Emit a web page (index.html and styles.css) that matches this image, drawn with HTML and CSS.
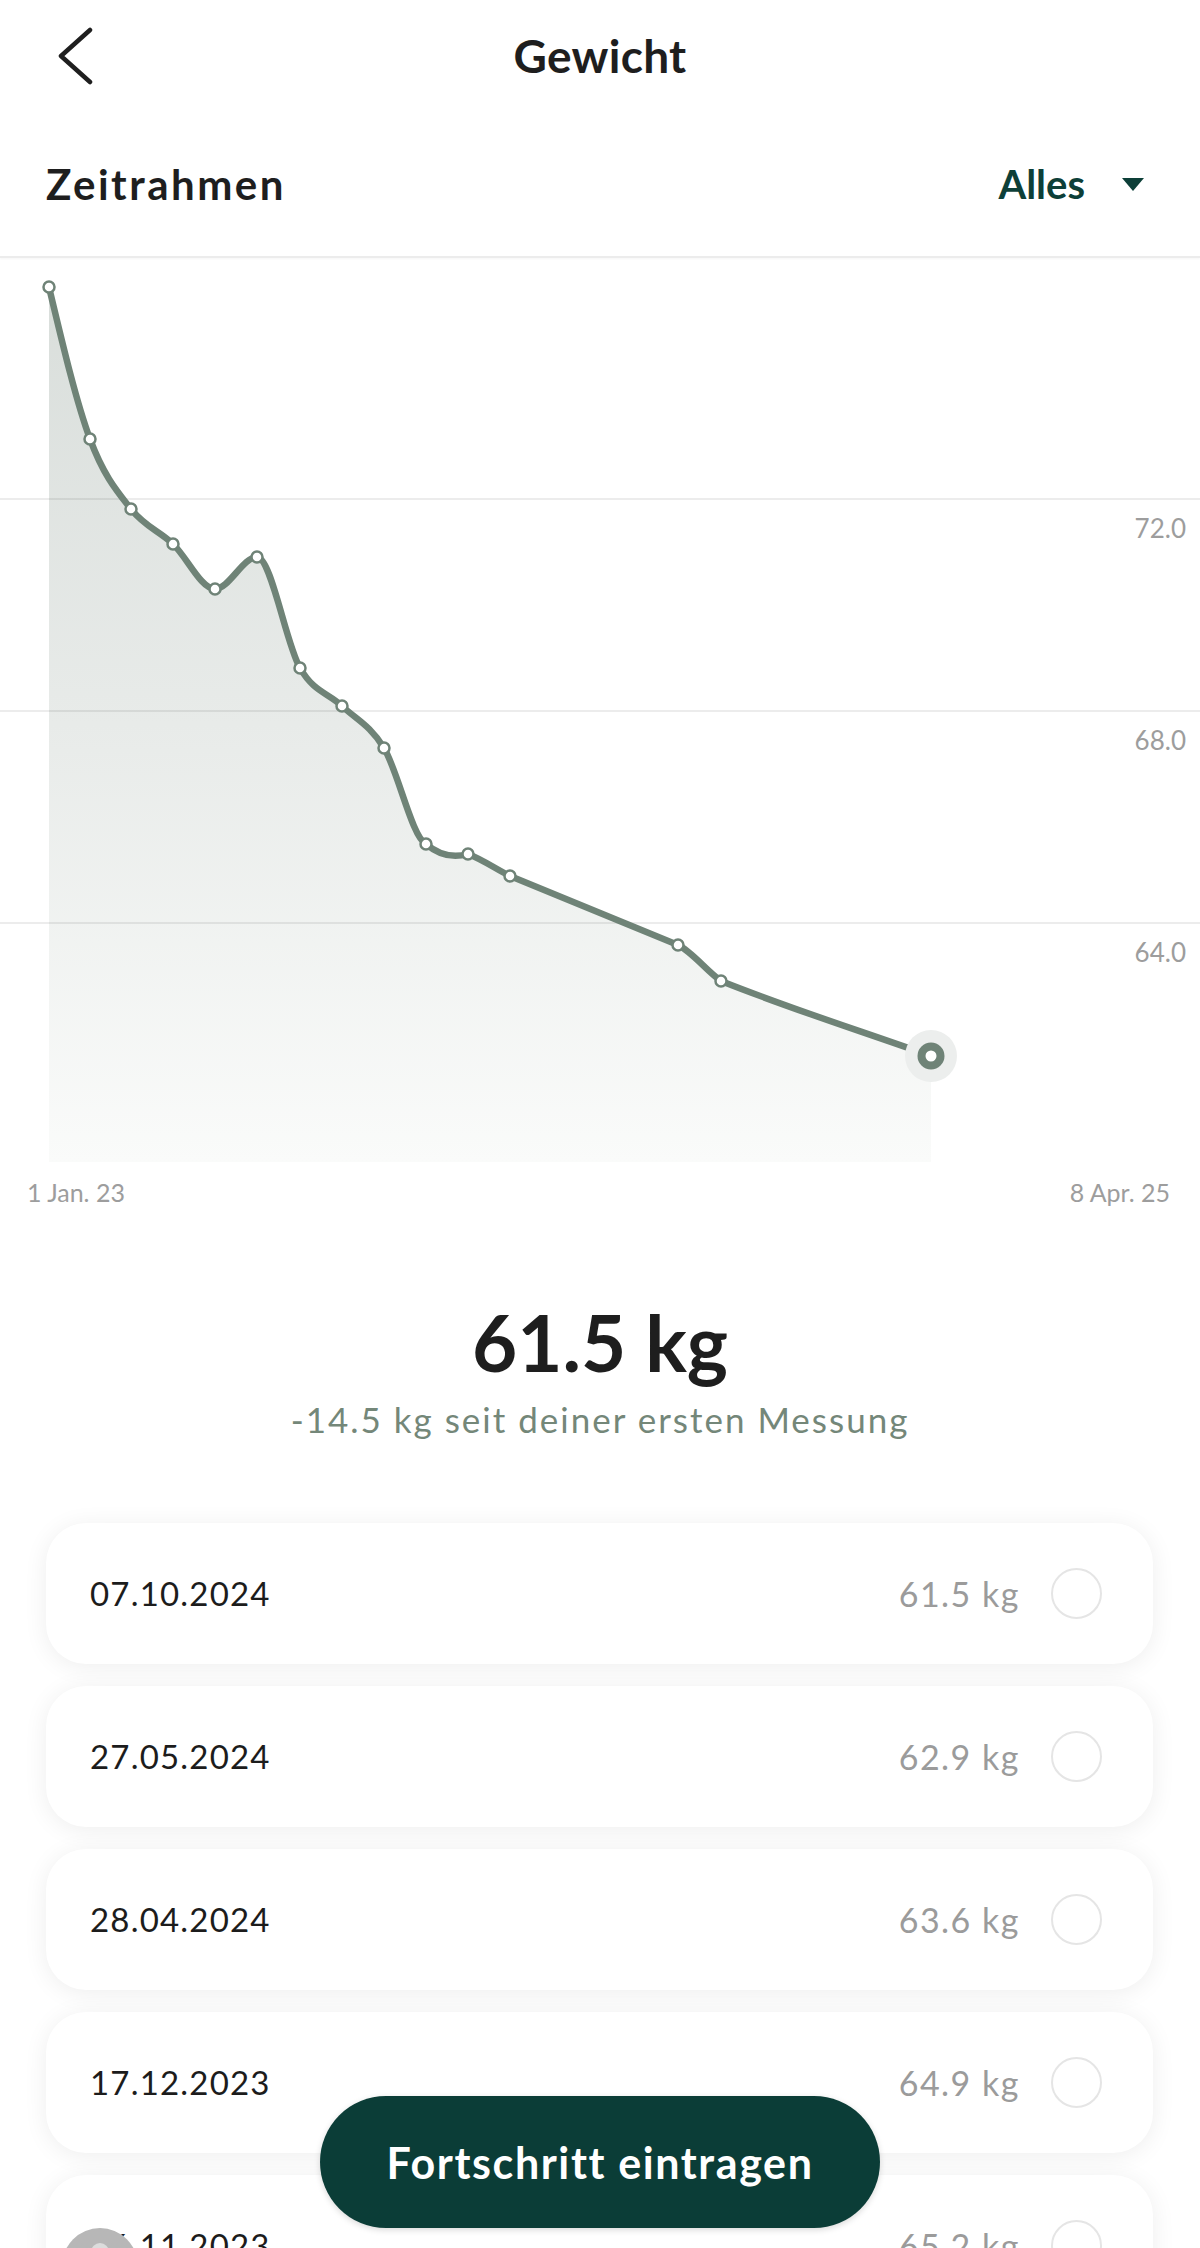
FILE: index.html
```html
<!DOCTYPE html>
<html lang="de">
<head>
<meta charset="utf-8">
<title>Gewicht</title>
<link rel="stylesheet" href="styles.css">
</head>
<body>
<div class="page">
  <header class="topbar">
    <div class="back">
      <svg class="chevron" width="36" height="60" viewBox="0 0 36 60" aria-hidden="true">
        <path d="M33 4 L4 30 L33 56" />
      </svg>
    </div>
    <h1 class="title">Gewicht</h1>
    <div></div>
  </header>

  <div class="filter">
    <span class="filter-label">Zeitrahmen</span>
    <span class="range">Alles
      <svg class="caret" width="22" height="13" viewBox="0 0 22 13" aria-hidden="true"><polygon points="0,0 22,0 11,13" /></svg>
    </span>
  </div>

  <svg class="chart" width="1200" height="960" viewBox="0 258 1200 960">
    <defs>
      <linearGradient id="areaFill" gradientUnits="userSpaceOnUse" x1="0" y1="287" x2="0" y2="1162">
        <stop offset="0" stop-color="#d9dedb"/>
        <stop offset="0.5" stop-color="#e8ebe9"/>
        <stop offset="1" stop-color="#fafbfa"/>
      </linearGradient>
    </defs>
    <path class="area" d="M49,287 C62.7,344.5 76.3,402 90,439 C103.7,476 117.3,491.6 131,509 C145,526.9 159,530.7 173,544 C187,557.3 201,589 215,589 C229,589 243,557 257,557 C271.3,557 285.7,643.2 300,668 C314,692.3 328,692.7 342,706 C356,719.3 370,725 384,748 C398,771 412,837.3 426,844 C440,856 454,858 468,854 C482,859.3 496,869 510,876 C566,899 622,922 678,945 C692.3,952 706.7,971 721,981 C791,1009 861,1031 931,1056 L931,1162 L49,1162 Z"/>
    <line class="grid" x1="0" y1="499" x2="1200" y2="499"/>
    <line class="grid" x1="0" y1="711" x2="1200" y2="711"/>
    <line class="grid" x1="0" y1="923" x2="1200" y2="923"/>
    <text class="axis" x="1186" y="538" text-anchor="end">72.0</text>
    <text class="axis" x="1186" y="750" text-anchor="end">68.0</text>
    <text class="axis" x="1186" y="962" text-anchor="end">64.0</text>
    <path class="line" d="M49,287 C62.7,344.5 76.3,402 90,439 C103.7,476 117.3,491.6 131,509 C145,526.9 159,530.7 173,544 C187,557.3 201,589 215,589 C229,589 243,557 257,557 C271.3,557 285.7,643.2 300,668 C314,692.3 328,692.7 342,706 C356,719.3 370,725 384,748 C398,771 412,837.3 426,844 C440,856 454,858 468,854 C482,859.3 496,869 510,876 C566,899 622,922 678,945 C692.3,952 706.7,971 721,981 C791,1009 861,1031 931,1056"/>
    <g class="dots">
      <circle cx="49" cy="287" r="5.5"/>
      <circle cx="90" cy="439" r="5.5"/>
      <circle cx="131" cy="509" r="5.5"/>
      <circle cx="173" cy="544" r="5.5"/>
      <circle cx="215" cy="589" r="5.5"/>
      <circle cx="257" cy="557" r="5.5"/>
      <circle cx="300" cy="668" r="5.5"/>
      <circle cx="342" cy="706" r="5.5"/>
      <circle cx="384" cy="748" r="5.5"/>
      <circle cx="426" cy="844" r="5.5"/>
      <circle cx="468" cy="854" r="5.5"/>
      <circle cx="510" cy="876" r="5.5"/>
      <circle cx="678" cy="945" r="5.5"/>
      <circle cx="721" cy="981" r="5.5"/>
    </g>
    <circle class="halo" cx="931" cy="1056" r="26"/>
    <circle class="endpoint" cx="931" cy="1056" r="9.5"/>
    <text class="axis axis-x" x="27" y="1202">1 Jan. 23</text>
    <text class="axis axis-x" x="1170" y="1202" text-anchor="end">8 Apr. 25</text>
  </svg>

  <section class="summary">
    <div class="big">61.5 kg</div>
    <div class="delta">-14.5 kg seit deiner ersten Messung</div>
  </section>

  <ul class="list">
    <li class="card"><span class="date">07.10.2024</span><span class="weight">61.5 kg</span><span class="radio"></span></li>
    <li class="card"><span class="date">27.05.2024</span><span class="weight">62.9 kg</span><span class="radio"></span></li>
    <li class="card"><span class="date">28.04.2024</span><span class="weight">63.6 kg</span><span class="radio"></span></li>
    <li class="card"><span class="date">17.12.2023</span><span class="weight">64.9 kg</span><span class="radio"></span></li>
    <li class="card"><span class="date">26.11.2023</span><span class="weight">65.2 kg</span><span class="radio"></span></li>
  </ul>

  <button class="cta">Fortschritt eintragen</button>
  <div class="bubble"><span class="bubble-inner"></span></div>
</div>
</body>
</html>
```

FILE: styles.css
```css
* {
  box-sizing: border-box;
  margin: 0;
  padding: 0;
}

html, body {
  width: 1200px;
  height: 2248px;
  overflow: hidden;
  background: #ffffff;
}

body {
  font-family: Lato, "Liberation Sans", sans-serif;
  color: #1e1e1e;
}

.page {
  position: relative;
  width: 1200px;
  height: 2248px;
  overflow: hidden;
}

.topbar {
  height: 112px;
  display: grid;
  grid-template-columns: 1fr auto 1fr;
  align-items: center;
}

.back {
  padding-left: 57px;
  display: flex;
  align-items: center;
}

.chevron path {
  fill: none;
  stroke: #1f1f1f;
  stroke-width: 4.5;
  stroke-linecap: round;
  stroke-linejoin: round;
}

.title {
  font-size: 46px;
  font-weight: 700;
  line-height: 1;
  letter-spacing: 0.3px;
  color: #1e1e1e;
}

.filter {
  height: 146px;
  display: flex;
  align-items: center;
  justify-content: space-between;
  padding: 0 56px 0 46px;
  border-bottom: 2px solid #ececec;
  box-shadow: 0 1px 2px rgba(0, 0, 0, 0.04);
}

.filter-label {
  font-size: 42px;
  font-weight: 700;
  line-height: 1;
  letter-spacing: 2.5px;
  color: #1e1e1e;
}

.range {
  display: flex;
  align-items: center;
  gap: 37px;
  font-size: 40px;
  font-weight: 700;
  line-height: 1;
  color: #0d3f38;
}

.caret polygon {
  fill: #0d3f38;
}

.chart {
  display: block;
  width: 1200px;
  height: 960px;
}

.area {
  fill: url(#areaFill);
}

.grid {
  stroke: rgba(0, 0, 0, 0.075);
  stroke-width: 2;
}

.line {
  fill: none;
  stroke: #6f8377;
  stroke-width: 6.5;
  stroke-linecap: round;
  stroke-linejoin: round;
}

.dots circle {
  fill: #ffffff;
  stroke: #6f8377;
  stroke-width: 2.5;
}

.halo {
  fill: #eceeed;
}

.endpoint {
  fill: #ffffff;
  stroke: #6f8377;
  stroke-width: 8;
}

.axis {
  font-family: Lato, "Liberation Sans", sans-serif;
  font-size: 26px;
  fill: #9d9d9d;
}

.axis-x {
  font-size: 25px;
}

.summary {
  margin-top: 85px;
  text-align: center;
}

.big {
  font-size: 78px;
  font-weight: 700;
  line-height: 1;
  color: #1e1e1e;
}

.delta {
  margin-top: 21px;
  font-size: 35px;
  line-height: 1;
  letter-spacing: 2px;
  color: #748779;
}

.list {
  list-style: none;
  margin-top: 86px;
  padding: 0 47px 0 46px;
  display: flex;
  flex-direction: column;
  gap: 22px;
}

.card {
  height: 141px;
  flex: none;
  border-radius: 40px;
  background: #ffffff;
  box-shadow: 0 3px 24px rgba(0, 0, 0, 0.07);
  display: flex;
  align-items: center;
  padding: 0 51px 0 44px;
}

.date {
  flex: 1;
  font-size: 33px;
  line-height: 1;
  letter-spacing: 1.2px;
  color: #1c1c1c;
}

.weight {
  font-size: 34px;
  line-height: 1;
  letter-spacing: 1.5px;
  color: #9b9b9b;
  margin-right: 31px;
}

.radio {
  width: 51px;
  height: 51px;
  flex: none;
  border-radius: 50%;
  border: 2px solid #e5e5e5;
}

.cta {
  position: absolute;
  left: 320px;
  top: 2096px;
  width: 560px;
  height: 132px;
  border: none;
  border-radius: 66px;
  background: #0b3d37;
  color: #ffffff;
  font-family: Lato, "Liberation Sans", sans-serif;
  font-size: 43px;
  font-weight: 700;
  letter-spacing: 1.6px;
  box-shadow: 0 2px 6px rgba(0, 0, 0, 0.15);
  display: flex;
  align-items: center;
  justify-content: center;
}

.bubble {
  position: absolute;
  left: 62px;
  top: 2228px;
  width: 76px;
  height: 76px;
  border-radius: 50%;
  background: #b7b7b7;
  display: flex;
  justify-content: center;
}

.bubble-inner {
  margin-top: 15px;
  width: 18px;
  height: 18px;
  border-radius: 50%;
  background: #dcdcdc;
}
```
